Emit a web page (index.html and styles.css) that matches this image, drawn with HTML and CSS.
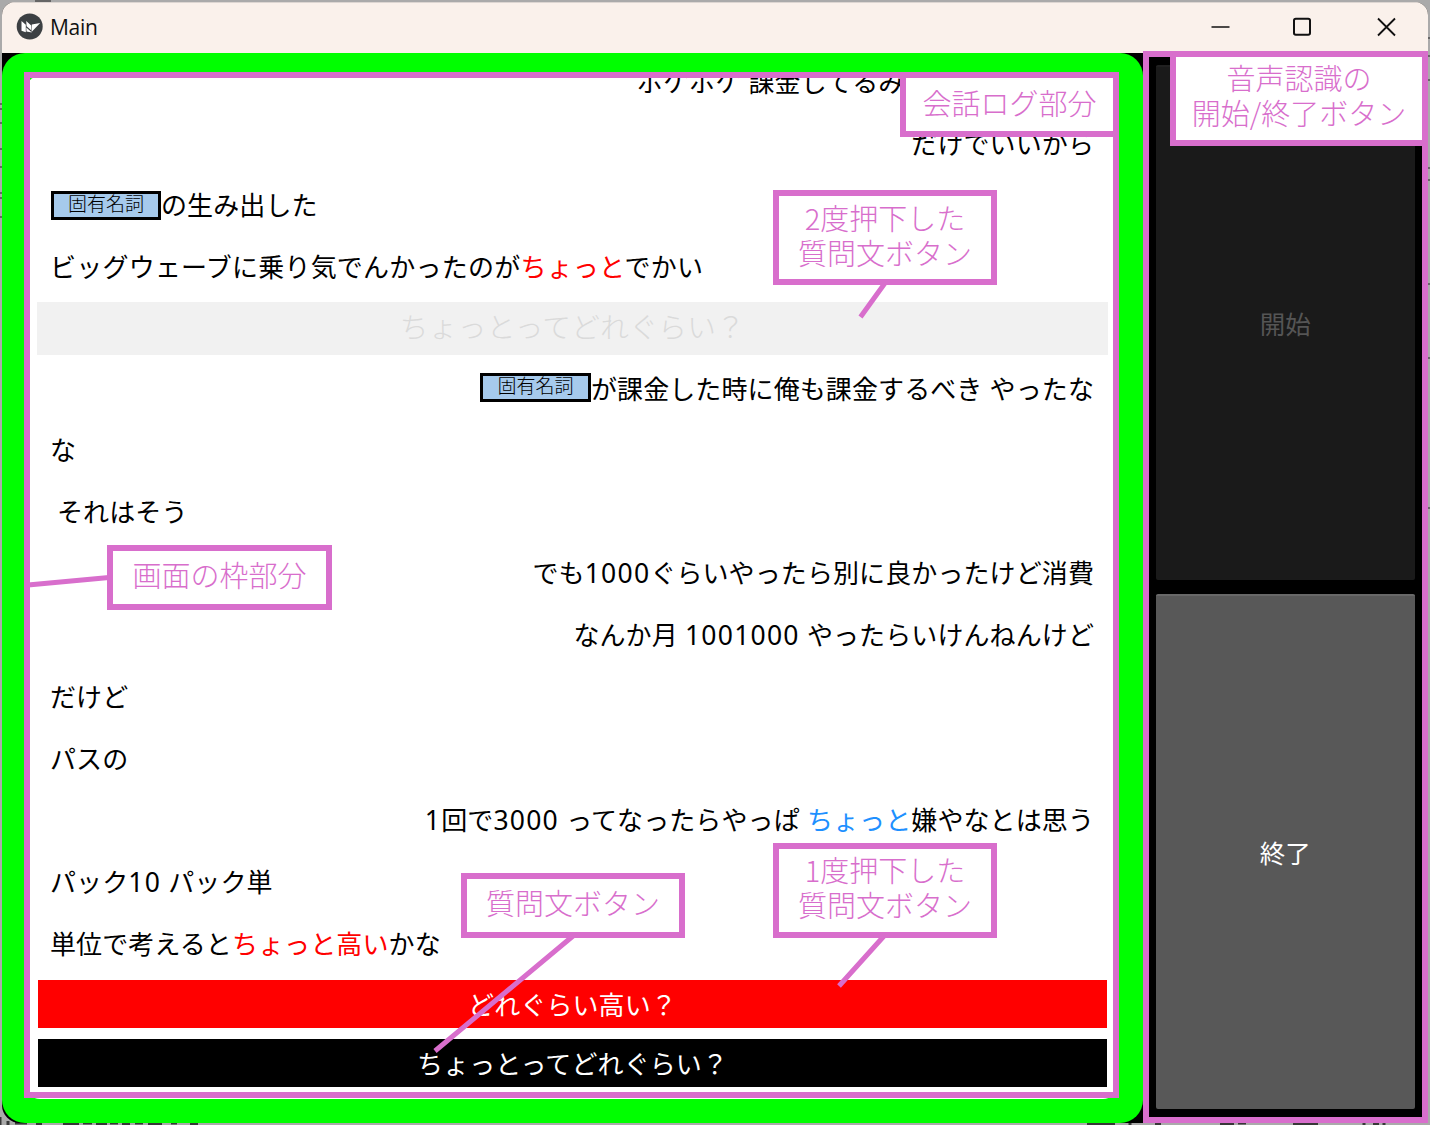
FILE: index.html
```html
<!DOCTYPE html>
<html lang="ja">
<head>
<meta charset="utf-8">
<title>Main</title>
<link rel="stylesheet" href="styles.css">
</head>
<body>
<svg class="backdrop" width="1430" height="1125" aria-hidden="true">
  <path d="M35 1h16M0 104h3M0 109h3M0 123h3M0 149h3M0 167h3M0 193h3M0 198h3M0 217h3M1427 38h3M1427 56h3M1427 80h3M1427 168h3M1427 180h3M1427 284h3M1427 358h3M1427 508h3" stroke="#666" stroke-width="2"/>
  <path d="M0 1117v8M8 1121v4M15 1123h12M36 1124h6M63 1124h16M83 1123h9M96 1124h11M110 1123h8M122 1124h8M135 1123h8M148 1124h14M171 1123h6M190 1124h8M1087 1124h28M1130 1123v2M1155 1124h6M1220 1124h14M1238 1123h8M1293 1124h25M1364 1123v2M1373 1124h6M1384 1123v2" stroke="#383838" stroke-width="3"/>
</svg>
<div class="window">
  <header class="titlebar">
    <svg class="logo" width="28" height="28" viewBox="0 0 28 28">
      <circle cx="13.700" cy="13.500" r="13" fill="#3c4043"/>
      <path d="M5.500 8l4.300 3.800v7.400l-4.300-1.500zM10.200 8l5 4.600v4.600l-4.600-4zM15.800 11.400l8.400-1.500-7 7.300-1.600 1.800zM10.300 14.600l5.600 4.800-5.400-.9z" fill="#fff"/>
    </svg>
    <h1 class="title">Main</h1>
    <svg class="controls" width="188" height="22" viewBox="0 0 188 22" fill="none" stroke="#111" stroke-width="2">
      <path d="M.5 11h18" stroke-width="1.500"/>
      <rect x="83" y="2.800" width="16" height="16" rx="1.800"/>
      <path d="M167 2.500l17 17M184 2.500l-17 17" stroke-width="1.800"/>
    </svg>
  </header>
  <main class="content">
    <section class="panel">
      <div class="log">
        <p class="row right first"><span class="t">ポケポケ 課金してるみ</span></p>
        <p class="row right"><span class="t">だけでいいから</span></p>
        <p class="row"><span class="mask low">固有名詞</span><span class="t">の生み出した</span></p>
        <p class="row"><span class="t long">ビッグウェーブに乗り気でんかったのが<em class="red">ちょっと</em>でかい</span></p>
        <button class="question faded"><span class="t">ちょっとってどれぐらい？</span></button>
        <p class="row right"><span class="mask">固有名詞</span><span class="t">が課金した時に俺も課金するべき やったな</span></p>
        <p class="row"><span class="t">な</span></p>
        <p class="row indent"><span class="t">それはそう</span></p>
        <p class="row right"><span class="t">でも<span class="num">1000</span>ぐらいやったら別に良かったけど消費</span></p>
        <p class="row right"><span class="t">なんか月 <span class="num">1001000</span> やったらいけんねんけど</span></p>
        <p class="row"><span class="t">だけど</span></p>
        <p class="row"><span class="t">パスの</span></p>
        <p class="row right"><span class="t"><span class="num">1</span>回で<span class="num">3000</span> ってなったらやっぱ <em class="blue">ちょっと</em>嫌やなとは思う</span></p>
        <p class="row"><span class="t">パック<span class="num">10</span> パック単</span></p>
        <p class="row"><span class="t">単位で考えると<em class="red">ちょっと高い</em>かな</span></p>
        <button class="question pressed"><span class="t">どれぐらい高い？</span></button>
        <button class="question"><span class="t">ちょっとってどれぐらい？</span></button>
      </div>
    </section>
    <aside class="side">
      <button class="voice off">開始</button>
      <button class="voice">終了</button>
    </aside>
  </main>
</div>
<div class="outline outline-log"></div>
<div class="outline outline-side"></div>
<svg class="leaders" width="1430" height="1125" fill="none" stroke="#d86ecc" stroke-width="5">
  <path d="M885 283L860.500 317M884 936L839 986M573 936L435 1051M28 585L109 577.500"/>
</svg>
<div class="callout c-log">会話ログ部分</div>
<div class="callout c-voice">音声認識の<br>開始/終了ボタン</div>
<div class="callout c-twice">2度押下した<br>質問文ボタン</div>
<div class="callout c-frame">画面の枠部分</div>
<div class="callout c-once">1度押下した<br>質問文ボタン</div>
<div class="callout c-question">質問文ボタン</div>
</body>
</html>
```
FILE: styles.css
```css
* { box-sizing: border-box; }
body {
  margin: 0;
  width: 1430px;
  height: 1125px;
  padding: 2px;
  overflow: hidden;
  position: relative;
  background: #aaa;
  font-family: "Noto Sans CJK JP", sans-serif;
}
p, h1 { margin: 0; }
em { font-style: normal; }
button { border: 0; padding: 0; font-family: inherit; }
.backdrop, .leaders { position: absolute; left: 0; top: 0; }
.window {
  position: relative;
  width: 1426px;
  height: 1121px;
  display: flex;
  flex-direction: column;
  border-radius: 13px 13px 18px 18px;
  overflow: hidden;
  background: #000;
}
.titlebar {
  height: 51px;
  flex: none;
  display: flex;
  align-items: center;
  padding: 0 29px 3px 14px;
  background: #faf1eb;
  border-top: 1px solid #ddd6d2;
}
.title {
  margin-left: 6px;
  font: 400 21px/30px "Open Sans", sans-serif;
  letter-spacing: -0.300px;
  color: #111;
}
.controls { margin-left: auto; }
.content { flex: 1; display: flex; }
.panel {
  width: 1141px;
  padding: 23px 26px 23px 24px;
  background: #0f0;
  border-radius: 23px;
}
.log {
  height: 1023px;
  overflow: hidden;
  display: flex;
  flex-direction: column;
  padding: 0 9px 0 11px;
  background: #fff;
  border-radius: 14px;
}
.row {
  flex: none;
  height: 61.700px;
  padding: 0 14px 0 13px;
  display: flex;
  align-items: center;
  font-size: 26px;
  letter-spacing: 0.100px;
  word-spacing: 1.200px;
  line-height: 38px;
  color: #000;
  white-space: pre;
}
.row.right { justify-content: flex-end; }
.row.indent { padding-left: 20px; }
.row.first { justify-content: flex-start; padding-left: 600px; margin-top: -26px; }
.long { letter-spacing: 0.220px; }
.num { font-family: "Noto Sans", sans-serif; font-size: 26.500px; letter-spacing: 1.250px; }
.red { color: #f00; }
.blue { color: #1e90ff; }
.mask {
  width: 111px;
  height: 29px;
  flex: none;
  margin-left: 1px;
  border: 3px solid #000;
  background: #a6caec;
  font-size: 19px;
  font-weight: 300;
  letter-spacing: 0;
  line-height: 18px;
  text-align: center;
}
.mask.low { width: 110px; margin-top: 3px; }
.question {
  flex: none;
  height: 48px;
  margin: 6px 1px 5px 1px;
  background: #000;
  color: #fff;
  font-size: 26px;
  letter-spacing: 0.100px;
  line-height: 38px;
}
.question.pressed { background: #f00; }
.question.faded {
  height: 53px;
  margin: 5px 0 2px;
  padding-bottom: 4px;
  background: #f1f1f1;
  color: #dadada;
  font-size: 28.700px;
  letter-spacing: 0.300px;
  font-weight: 300;
}
.side {
  flex: 1;
  display: flex;
  flex-direction: column;
  gap: 14px;
  padding: 12px 13px 14px 12.500px;
}
.voice {
  flex: 1;
  background: #585858;
  color: #fff;
  font-size: 25.500px;
  padding-bottom: 2px;
  border-radius: 2px;
  border-top: 2px solid #686868;
}
.voice.off { background: #1a1a1a; color: #555; border-top-color: #202020; }
.outline { position: absolute; border: 6px solid #d86ecc; }
.outline-log { left: 24px; top: 72px; width: 1095px; height: 1026px; }
.outline-side { left: 1143px; top: 51px; width: 285px; height: 1072px; }
.callout {
  position: absolute;
  display: flex;
  align-items: center;
  justify-content: center;
  text-align: center;
  border: 6px solid #d86ecc;
  background: #fff;
  color: #d86ecc;
  font-size: 29px;
  font-weight: 300;
  line-height: 35px;
  white-space: nowrap;
  padding-bottom: 6px;
}
.c-log { left: 900px; top: 72px; width: 219px; height: 65px; padding-bottom: 4px; }
.c-voice { left: 1170px; top: 51px; width: 258px; height: 95px; padding-bottom: 8px; }
.c-twice { left: 773px; top: 190px; width: 224px; height: 95px; }
.c-frame { left: 107px; top: 545px; width: 225px; height: 65px; }
.c-once { left: 773px; top: 843px; width: 224px; height: 95px; padding-bottom: 8px; }
.c-question { left: 461px; top: 873px; width: 224px; height: 65px; }
```
